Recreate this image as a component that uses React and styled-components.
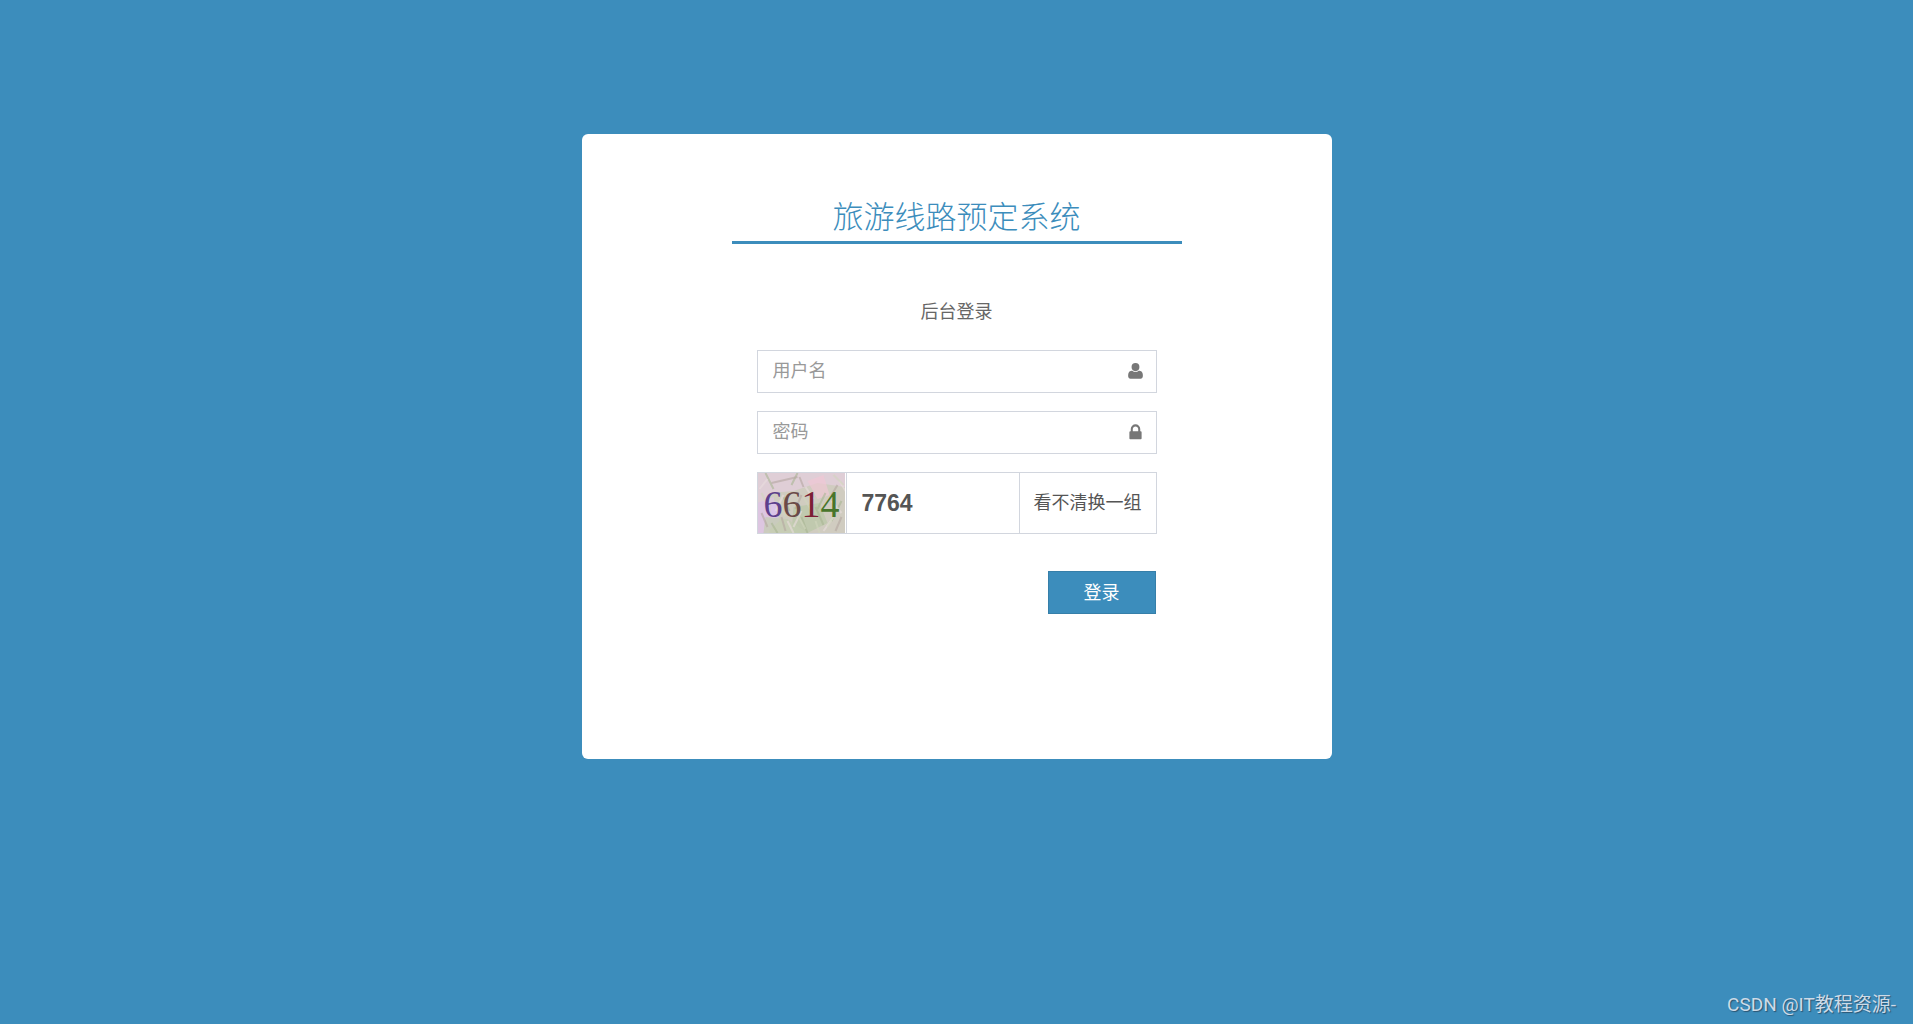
import React, { useState } from "react";
import styled, { createGlobalStyle } from "styled-components";

const GlobalStyle = createGlobalStyle`
  * {
    box-sizing: border-box;
  }
  body {
    margin: 0;
    background: #3c8dbc;
    color: #555;
    font-family: "Liberation Sans", "Noto Sans CJK SC", sans-serif;
    font-size: 18px;
    font-weight: 400;
  }
  input,
  button {
    font: inherit;
    color: inherit;
  }
`;

const noise = [
  ["#e6cfe0", "M0 0H88V14L60 10L36 18L12 20V60H0Z"],
  ["#f0c8d4", "M50 8L66 2L72 22L60 26Z"],
  ["#dcc3e6", "M0 30L16 24L22 48L8 60H0Z"],
  ["#dcc3f0", "M14 30L20 28L19 44L13 46Z"],
  ["#b9c7a6", "M36 34L62 30L70 50L50 60H34Z"],
  ["#c3cdb0", "M8 44L30 46L50 60H6Z"],
];

const scratches = [
  ["#a9b592", "M8 0L16 16M40 0L34 12M26 24L32 38M68 20L60 36M84 28L74 48M58 34L66 52M44 44L50 60M14 50L20 60"],
  ["#e9ddde", "M2 16L10 6M18 38L26 22M36 54L44 38M66 58L76 44M74 28L84 40M48 14L56 26M30 48L36 60M82 8L88 18"],
  ["#b4a7a0", "M4 40L10 54M14 10L40 4M44 22L38 36M80 12L74 22M84 44L78 58M24 44L28 58M42 4L46 14"],
  ["#d0d6bd", "M20 28L28 44M46 24L54 38M40 42L48 56M80 36L70 54M76 2L86 12M58 48L62 60M4 20L10 32"],
];

const digits = [
  { value: "6", x: 6, color: "#5d3f8c" },
  { value: "6", x: 25, color: "#6b4a48" },
  { value: "1", x: 44, color: "#7c1f35" },
  { value: "4", x: 63, color: "#48752b" },
];

const UserIcon = () => (
  <Icon viewBox="0 90 1792 1792" aria-hidden="true">
    <path d="M1590 1420q0 109-62.5 177t-150.5 68h-962q-88 0-150.5-68t-62.5-177q0-105 12-190t50-160 105-118 160-43q40 0 62 18 130 112 305 112t305-112q22-18 62-18 93 0 160 43t105 118 50 160 12 190z" />
    <ellipse cx="896" cy="570" rx="370" ry="385" />
  </Icon>
);

const LockIcon = () => (
  <Icon viewBox="0 0 1792 1792" aria-hidden="true">
    <path d="M640 768h512v-192q0-106-75-181t-181-75-181 75-75 181v192zm832 96v576q0 40-28 68t-68 28h-960q-40 0-68-28t-28-68v-576q0-40 28-68t68-28h32v-192q0-184 132-316t316-132 316 132 132 316v192h32q40 0 68 28t28 68z" />
  </Icon>
);

const Captcha = () => (
  <CaptchaImage viewBox="0 0 88 60" preserveAspectRatio="xMidYMid slice" role="img" aria-label="验证码">
    <rect width="88" height="60" fill="#d0ccc0" />
    {noise.map(([color, d]) => (
      <path key={d} d={d} fill={color} opacity="0.7" />
    ))}
    {scratches.map(([color, d]) => (
      <path key={d} d={d} stroke={color} strokeWidth="2" fill="none" opacity="0.6" />
    ))}
    {digits.map((el, i) => (
      <text key={i} x={el.x} y="44" fill={el.color}>
        {el.value}
      </text>
    ))}
  </CaptchaImage>
);

const App = () => {
  const [username, setUsername] = useState("");
  const [password, setPassword] = useState("");
  const [code, setCode] = useState("7764");

  return (
    <Page>
      <GlobalStyle />
      <Card>
        <Title>旅游线路预定系统</Title>
        <Form onSubmit={(e) => e.preventDefault()}>
          <Subtitle>后台登录</Subtitle>
          <Field>
            <Input
              aria-label="用户名"
              placeholder="用户名"
              value={username}
              onChange={(e) => setUsername(e.target.value)}
            />
            <UserIcon />
          </Field>
          <Field>
            <Input
              type="password"
              aria-label="密码"
              placeholder="密码"
              value={password}
              onChange={(e) => setPassword(e.target.value)}
            />
            <LockIcon />
          </Field>
          <Field $tall>
            <Captcha />
            <CodeInput
              aria-label="验证码"
              value={code}
              onChange={(e) => setCode(e.target.value)}
            />
            <Refresh type="button">看不清换一组</Refresh>
          </Field>
          <Submit type="submit">登录</Submit>
        </Form>
      </Card>
      <Watermark>CSDN @IT教程资源-</Watermark>
    </Page>
  );
};
export default App;

const Page = styled.main`
  position: relative;
  display: flex;
  flex-direction: column;
  align-items: center;
  min-height: 100vh;
  padding: 134px 16px 80px;
`;

const Card = styled.section`
  display: flex;
  flex-direction: column;
  align-items: center;
  width: 100%;
  max-width: 750px;
  padding: 62px 16px 145px;
  border-radius: 6px;
  background: #fff;
`;

const Title = styled.h1`
  width: 100%;
  max-width: 450px;
  margin: 0;
  padding-bottom: 1px;
  border-bottom: 3px solid #3c8dbc;
  color: #3c8dbc;
  font-size: 31px;
  font-weight: 300;
  line-height: 44px;
  text-align: center;
`;

const Form = styled.form`
  display: flex;
  flex-direction: column;
  gap: 18px;
  width: 100%;
  max-width: 400px;
  padding-top: 55px;
`;

const Subtitle = styled.p`
  margin: 0 0 7px;
  color: #666;
  line-height: 26px;
  text-align: center;
`;

const Field = styled.div`
  display: flex;
  align-items: center;
  height: ${({ $tall }) => ($tall ? "62px" : "43px")};
  border: 1px solid #d2d6de;
`;

const Input = styled.input`
  flex: 1;
  min-width: 0;
  height: 100%;
  padding: 0 15px;
  border: 0;
  outline: 0;
  background: transparent;
  &::placeholder {
    color: #999;
    opacity: 1;
  }
`;

const CodeInput = styled(Input)`
  margin-left: 1px;
  border-left: 1px solid #d2d6de;
  border-right: 1px solid #d2d6de;
  font-size: 23px;
  font-weight: 700;
`;

const Icon = styled.svg`
  width: 19px;
  height: 19px;
  margin-right: 11px;
  fill: #777;
`;

const CaptchaImage = styled.svg`
  width: 87px;
  height: 60px;
  text {
    font-family: "Liberation Serif", serif;
    font-size: 38px;
    font-weight: 400;
  }
`;

const Refresh = styled.button`
  height: 100%;
  padding: 0 14px 4px;
  border: 0;
  background: transparent;
  cursor: pointer;
`;

const Submit = styled.button`
  align-self: flex-end;
  width: 108px;
  height: 43px;
  margin: 19px 1px 0 0;
  padding: 0 0 4px;
  border: 1px solid #367fa9;
  background: #3c8dbc;
  color: #fff;
  cursor: pointer;
`;

const Watermark = styled.div`
  position: absolute;
  right: 17px;
  bottom: 6px;
  color: #cddbe8;
  font-family: Roboto, "Noto Sans CJK SC", sans-serif;
  font-size: 19px;
  line-height: 26px;
  text-shadow: 1px 1px 1px #2b5470;
`;
